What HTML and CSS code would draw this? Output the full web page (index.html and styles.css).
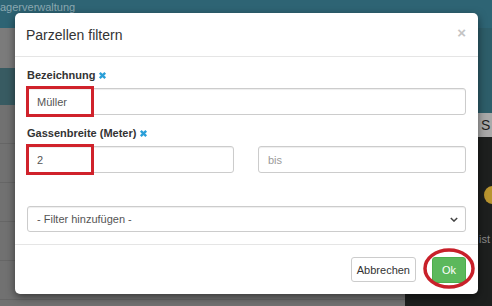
FILE: index.html
```html
<!DOCTYPE html>
<html lang="de">
<head>
  <meta charset="UTF-8">
  <meta name="viewport" content="width=device-width, initial-scale=1.0">
  <title>Lagerverwaltung</title>
  <link rel="stylesheet" href="styles.css">
</head>
<body>
  <div class="app">
    <header class="topbar"><span class="brand">agerverwaltung</span></header>
    <div class="workspace">
      <main class="list">
        <div class="toolbar"></div>
        <div class="tabs"></div>
        <div class="row"></div>
        <div class="row"></div>
        <div class="row"></div>
        <div class="row"></div>
        <div class="row"></div>
      </main>
      <aside class="panel">
        <div class="panel-top"></div>
        <div class="panel-head">S</div>
        <div class="panel-media">
          <span class="blob"></span>
          <span class="caption">ist</span>
        </div>
      </aside>
    </div>
  </div>

  <div class="modal">
    <div class="modal-header">
      <h4 class="modal-title">Parzellen filtern</h4>
      <button class="close" type="button">&times;</button>
    </div>

    <div class="modal-body">
      <div class="form-group">
        <label>Bezeichnung
          <svg class="remove" viewBox="0 0 10 10"><path d="M2 2L8 8M8 2L2 8"/></svg>
        </label>
        <div class="field">
          <input type="text" value="Müller">
          <span class="mark"></span>
        </div>
      </div>

      <div class="form-group">
        <label>Gassenbreite (Meter)
          <svg class="remove" viewBox="0 0 10 10"><path d="M2 2L8 8M8 2L2 8"/></svg>
        </label>
        <div class="range">
          <div class="field">
            <input type="text" value="2">
            <span class="mark"></span>
          </div>
          <input type="text" placeholder="bis">
        </div>
      </div>

      <div class="select-wrap">
        <select>
          <option>- Filter hinzufügen -</option>
        </select>
        <svg class="chevron" viewBox="0 0 10 6"><path d="M1 1L5 5L9 1"/></svg>
      </div>
    </div>

    <div class="modal-footer">
      <button class="btn" type="button">Abbrechen</button>
      <span class="ok-wrap">
        <button class="btn btn-success" type="button">Ok</button>
        <svg class="circle" viewBox="0 0 52 41"><ellipse cx="26" cy="20.5" rx="24" ry="18.5"/></svg>
      </span>
    </div>
  </div>
</body>
</html>
```

FILE: styles.css
```css
body {
  margin: 0;
  font-family: "Liberation Sans", Arial, sans-serif;
  color: #333;
  background: #6a6a6a;
  overflow: hidden;
}

/* page behind the dialog, already dimmed */
.app {
  height: 306px;
  display: flex;
  flex-direction: column;
}
.topbar {
  height: 28px;
  background: #2e6474;
  flex-shrink: 0;
}
.brand {
  display: block;
  padding-top: 1px;
  font-size: 11px;
  line-height: 12px;
  color: rgba(255,255,255,0.45);
}
.workspace {
  flex-grow: 1;
  display: grid;
  grid-template-columns: 1fr 87px;
}
.list {
  background: #717171;
}
.toolbar {
  height: 40px;
  background: #7b7b7b;
}
.tabs {
  height: 37px;
  background: #385b62;
}
.row {
  height: 38px;
  border-bottom: 1px solid #666;
}
.panel {
  display: flex;
  flex-direction: column;
  background: #1d1f1e;
}
.panel-top {
  height: 85px;
  background: #2d5d69;
}
.panel-head {
  height: 24px;
  padding-left: 76px;
  background: #a9a9a9;
  color: #1e1e1e;
  font-size: 14px;
  line-height: 24px;
}
.panel-media {
  flex-grow: 1;
  position: relative;
}
.blob {
  position: absolute;
  left: 79px;
  top: 49px;
  width: 16px;
  height: 18px;
  border-radius: 50%;
  background: #b8942f;
}
.caption {
  position: absolute;
  left: 74px;
  top: 96px;
  font-size: 11px;
  color: #8a8a8a;
}

/* dialog */
.modal {
  position: absolute;
  left: 15px;
  top: 13px;
  width: 463px;
  background: #fff;
  border-radius: 5px;
  box-shadow: 0 3px 9px rgba(0,0,0,0.5);
}
.modal-header {
  height: 43px;
  padding: 0 12px 0 11px;
  border-bottom: 1px solid #e5e5e5;
  display: flex;
  align-items: center;
  justify-content: space-between;
}
.modal-title {
  margin: 0;
  font-size: 14px;
  font-weight: normal;
  color: #333;
}
.close {
  border: none;
  background: none;
  padding: 0;
  margin-top: -4px;
  font-family: inherit;
  font-size: 15px;
  font-weight: bold;
  color: #c4c4c4;
  line-height: 1;
}
.modal-body {
  padding: 11px 12px 12px;
  border-bottom: 1px solid #e5e5e5;
}
.form-group {
  margin-bottom: 11px;
}
label {
  display: flex;
  align-items: center;
  height: 14px;
  margin-bottom: 6px;
  font-size: 11px;
  font-weight: bold;
  color: #333;
}
.remove {
  width: 9px;
  height: 9px;
  margin-left: 3px;
  fill: none;
  stroke: #2a9fd8;
  stroke-width: 2.6;
}
input, select {
  display: block;
  width: 100%;
  box-sizing: border-box;
  height: 27px;
  padding: 0 9px;
  border: 1px solid #ccc;
  border-radius: 3px;
  box-shadow: inset 0 1px 1px rgba(0,0,0,0.07);
  font-family: inherit;
  font-size: 11px;
  color: #555;
  background: #fff;
}
input::placeholder {
  color: #9a9a9a;
}
.field {
  position: relative;
}
.range {
  display: grid;
  grid-template-columns: 207px 1fr;
  gap: 24px;
}
.mark {
  position: absolute;
  left: -1px;
  top: -2px;
  width: 68px;
  height: 31px;
  box-sizing: border-box;
  border: 3px solid #d0222b;
}
.select-wrap {
  position: relative;
  margin-top: 33px;
}
select {
  height: 26px;
  appearance: none;
  -webkit-appearance: none;
}
.chevron {
  position: absolute;
  right: 8px;
  top: 11px;
  width: 8px;
  height: 5px;
  fill: none;
  stroke: #444;
  stroke-width: 1.8;
}
.modal-footer {
  height: 49px;
  padding: 12px;
  box-sizing: border-box;
  display: flex;
  justify-content: flex-end;
  align-items: flex-start;
  gap: 16px;
}
.btn {
  height: 25px;
  padding: 0 5px;
  border: 1px solid #ccc;
  border-radius: 3px;
  background: #fff;
  font-family: inherit;
  font-size: 11px;
  color: #333;
}
.btn-success {
  width: 34px;
  height: 26px;
  padding: 0;
  background: #5cb85c;
  border-color: #4cae4c;
  color: #fff;
}
.ok-wrap {
  position: relative;
  display: block;
}
.circle {
  position: absolute;
  left: -9px;
  top: -9px;
  width: 52px;
  height: 41px;
  fill: none;
  stroke: #c8202a;
  stroke-width: 3.5;
  overflow: visible;
}
```
